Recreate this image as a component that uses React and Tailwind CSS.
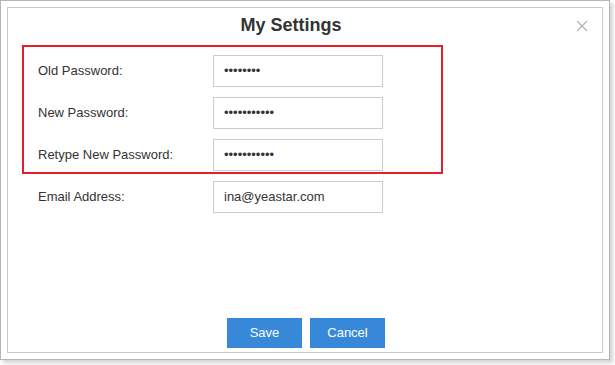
const rows = [
    { label: "Old Password:", value: "••••••••" },
    { label: "New Password:", value: "•••••••••••" },
    { label: "Retype New Password:", value: "•••••••••••" },
    { label: "Email Address:", value: "ina@yeastar.com" },
];

const App = () => {
    return (
        <div className="w-[615px] h-[365px] bg-white font-['Liberation_Sans',Arial,sans-serif] text-[#333]">
            {/* FRAME */}
            <div className="w-[610px] h-[360px] border border-[#b5b5b5] bg-white p-[6px] shadow-[3px_3px_4px_rgba(0,0,0,0.18)]">
                <div className="relative h-full border border-[#c9c9c9] flex flex-col">

                    {/* TITLE */}
                    <div className="relative pt-[7px] h-[38px] pr-[28px]">
                        <h2 className="text-center text-[18px] leading-[21px] font-bold text-[#333]">
                            My Settings
                        </h2>
                        <svg
                            className="absolute right-[14px] top-[12px]"
                            width="12"
                            height="12"
                            viewBox="0 0 12 12"
                        >
                            <path d="M1 1L11 11M11 1L1 11" stroke="#b0b0b0" strokeWidth="1.1" />
                        </svg>
                    </div>

                    {/* FORM */}
                    <div className="relative mt-[9px] flex flex-col gap-[10px] pl-[30px]">
                        {rows.map((row) => (
                            <div key={row.label} className="flex items-center h-[32px]">
                                <span className="w-[175px] text-[13px]">{row.label}</span>
                                <div className="w-[170px] h-[32px] border border-[#cccccc] pl-[10px] flex items-center text-[13px] text-[#333]">
                                    {row.value}
                                </div>
                            </div>
                        ))}

                        {/* annotation box */}
                        <div className="absolute left-[14px] top-[-10px] w-[421px] h-[129px] border-2 border-[#e3202a] pointer-events-none" />
                    </div>

                    {/* BUTTONS */}
                    <div className="mt-auto pb-[4px] flex justify-center gap-[8px] pl-[2px]">
                        <button className="w-[75px] h-[30px] bg-[#3788d8] text-white text-[13px]">
                            Save
                        </button>
                        <button className="w-[75px] h-[30px] bg-[#3788d8] text-white text-[13px]">
                            Cancel
                        </button>
                    </div>
                </div>
            </div>
        </div>
    );
};

export default App;
